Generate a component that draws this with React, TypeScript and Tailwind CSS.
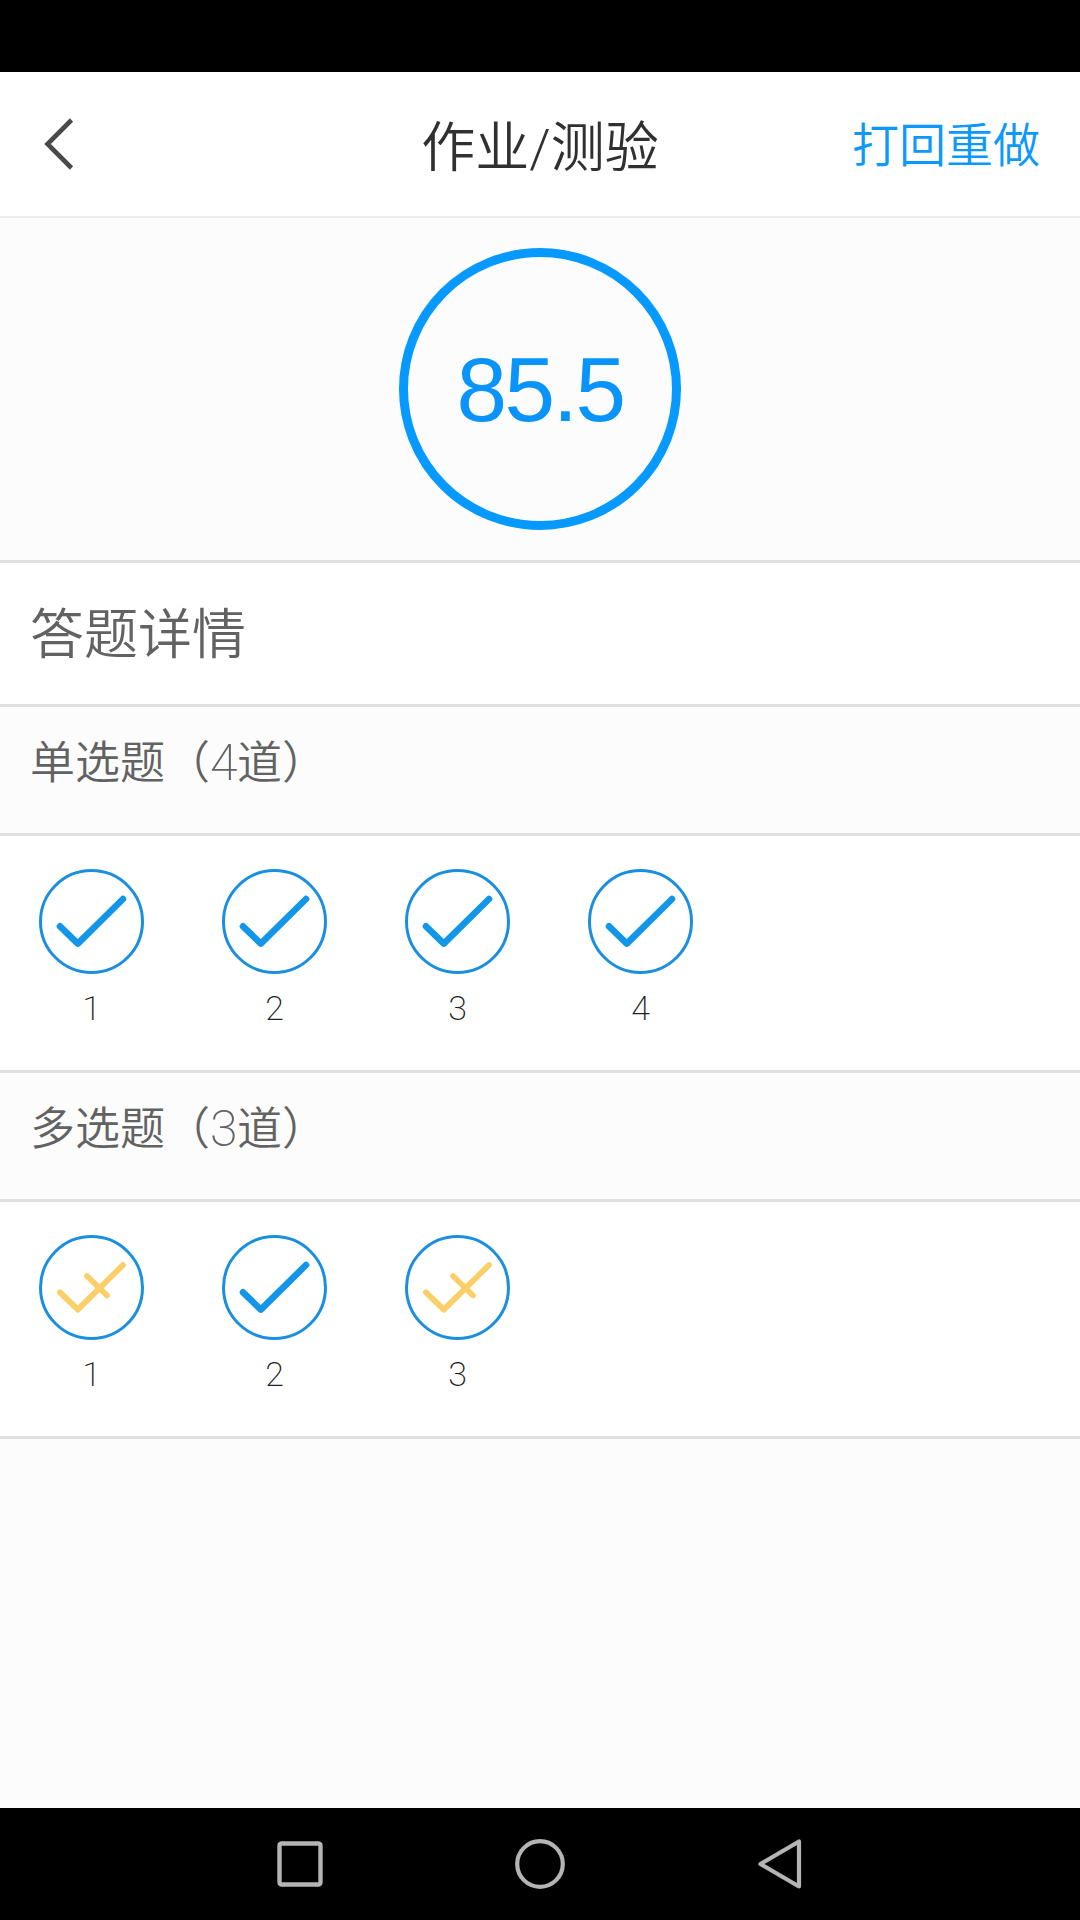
import React from 'react';

type Result = 'right' | 'partial';

const groups: { name: string; results: Result[] }[] = [
  { name: '单选题', results: ['right', 'right', 'right', 'right'] },
  { name: '多选题', results: ['partial', 'right', 'partial'] },
];

function ResultIcon({ result }: { result: Result }) {
  const right = result === 'right';
  return (
    <svg className="block size-[105px]" viewBox="0 0 105 105" fill="none">
      <circle cx="52.5" cy="52.5" r="51" stroke="#1a8fe0" strokeWidth="3" />
      <path
        d="M21 57.3 L38.8 74.6 L84 30"
        stroke={right ? '#1296ea' : '#fbcf68'}
        strokeWidth={right ? 6.6 : 5.8}
        strokeLinecap="round"
        strokeLinejoin="round"
      />
      {!right && <path d="M48 41 L68 60.5" stroke="#fbcf68" strokeWidth="5.8" strokeLinecap="round" />}
    </svg>
  );
}

export default function App() {
  return (
    <div className="flex h-[1920px] w-[1080px] flex-col overflow-hidden bg-[#fcfcfc] font-['Noto_Sans_CJK_SC',sans-serif]">
      <div className="h-[72px] shrink-0 bg-black" />

      <header className="grid h-[146px] shrink-0 grid-cols-3 items-center border-b-2 border-[#ebebeb] bg-white px-10">
        <svg className="ml-1 block h-[52px] w-8" viewBox="0 0 32 52" fill="none">
          <path d="M27.5 2 L3.5 26 L27.5 50" stroke="#4a4a4a" strokeWidth="4.6" />
        </svg>
        <h1 className="pt-[10px] text-center font-['Roboto','Noto_Sans_CJK_SC',sans-serif] text-[54px] leading-[60px] font-[350] whitespace-nowrap text-[#303030]">
          作业/测验
        </h1>
        <button className="pb-1 text-right text-[47px] leading-[60px] font-[350] text-[#0d99fb]">打回重做</button>
      </header>

      {/* Score */}
      <section className="flex h-[345px] shrink-0 justify-center border-b-3 border-[#e0e0e0] pt-[30px]">
        <div className="flex size-[282px] items-center justify-center rounded-full border-9 border-[#0699ff]">
          <span className="font-['Liberation_Sans',sans-serif] text-[91px] leading-none tracking-[-2.5px] text-[#0894fa]">85.5</span>
        </div>
      </section>

      <h2 className="h-36 shrink-0 border-b-3 border-[#e0e0e0] bg-white pl-[30px] text-[54px] leading-[135px] font-[350] text-[#626262]">
        答题详情
      </h2>

      {groups.map((group) => (
        <section key={group.name} className="shrink-0">
          <h3 className="flex h-[129px] border-b-3 border-[#e0e0e0] pl-[30px] text-[45px] leading-[106px] font-[350] text-[#626262]">
            <span>{group.name}（</span>
            <span className="w-[27px] pt-[3px] text-center font-['Roboto',sans-serif] text-[50px] font-extralight">{group.results.length}</span>
            <span>道）</span>
          </h3>
          <ul className="flex h-[237px] gap-[78px] border-b-3 border-[#e0e0e0] bg-white pt-[33px] pl-[39px]">
            {group.results.map((result, i) => (
              <li key={i} className="flex w-[105px] flex-col items-center">
                <ResultIcon result={result} />
                <span className="mt-[14px] font-['Roboto',sans-serif] text-[34px] leading-[40px] font-extralight text-[#202020]">{i + 1}</span>
              </li>
            ))}
          </ul>
        </section>
      ))}

      {/* System navigation */}
      <nav className="mt-auto flex h-28 shrink-0 items-center justify-between bg-black pr-[278px] pl-[277px]">
        <svg className="block h-[54px] w-[46px]" viewBox="0 0 46 54" fill="none" stroke="#b4b4b4">
          <rect x="2.5" y="6.5" width="41" height="41" rx="2" strokeWidth="4.4" />
        </svg>
        <svg className="block size-[54px]" viewBox="0 0 54 54" fill="none" stroke="#b4b4b4">
          <circle cx="27" cy="27" r="22.8" strokeWidth="4.2" />
        </svg>
        <svg className="block h-[54px] w-[46px]" viewBox="0 0 46 54" fill="none" stroke="#b4b4b4">
          <path d="M43 4.5 V49.5 L4.5 27 Z" strokeWidth="4.2" strokeLinejoin="round" />
        </svg>
      </nav>
    </div>
  );
}
